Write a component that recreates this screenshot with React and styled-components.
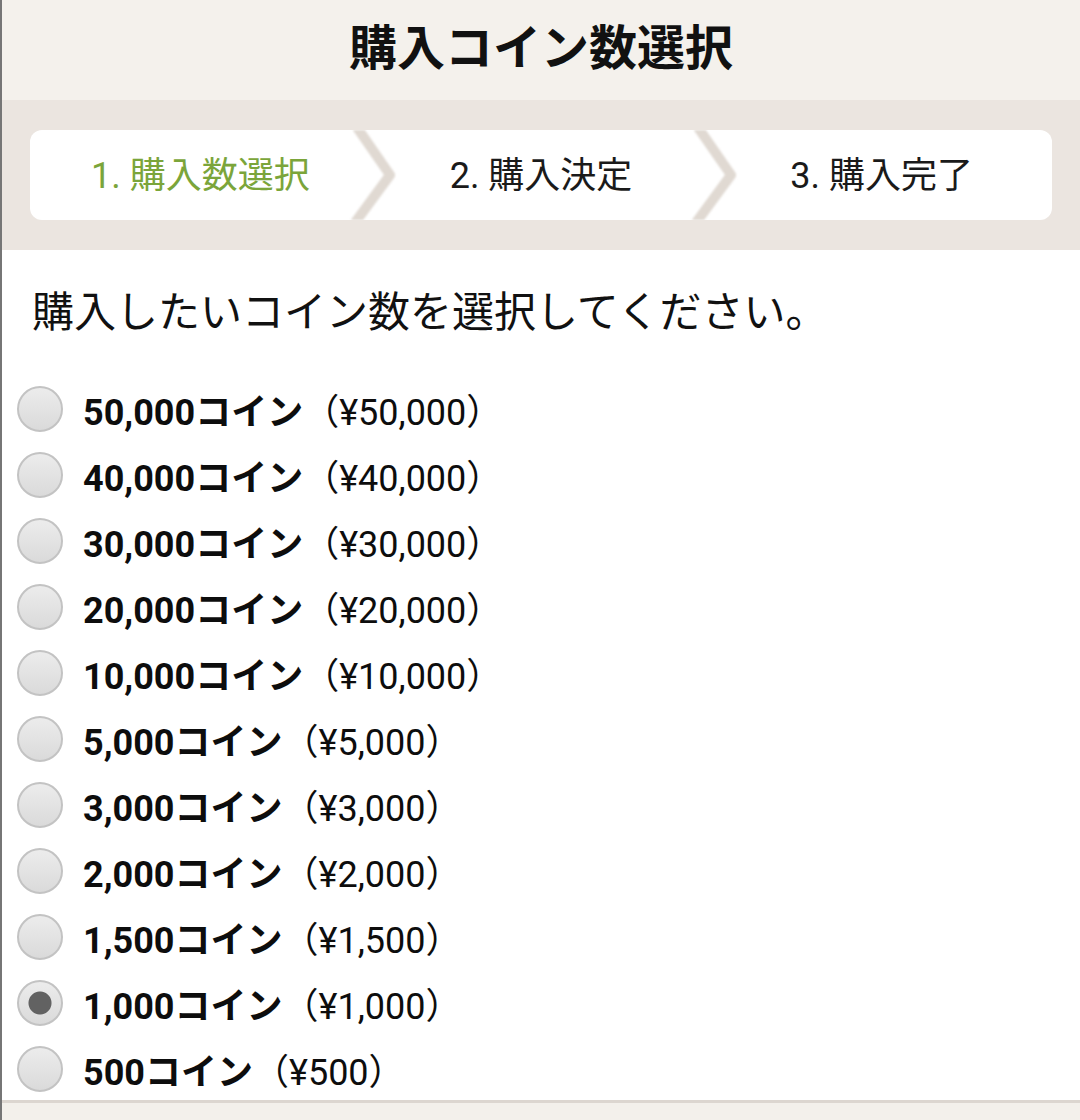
import { createGlobalStyle, styled } from "styled-components";
import { useState } from "react";

const GlobalStyle = createGlobalStyle`
  html, body {
    margin: 0;
    padding: 0;
    background: #ffffff;
  }
  body {
    font-family: Roboto, "Noto Sans CJK JP", "Noto Sans", sans-serif;
    color: #111111;
  }
  * { box-sizing: border-box; }
`;

const Page = styled.div`
  width: 1080px;
  min-height: 1120px;
  border-left: 2px solid #767676;
  display: flex;
  flex-direction: column;
`;

const Header = styled.header`
  height: 100px;
  background: #f4f1ec;
  display: flex;
  justify-content: center;
  align-items: center;
  padding-bottom: 12px;
`;

const Title = styled.h1`
  margin: 0;
  font-size: 48px;
  font-weight: 700;
  letter-spacing: 0;
`;

const StepBand = styled.div`
  background: #ebe5e0;
  padding: 30px 28px 30px 28px;
`;

const StepBox = styled.ol`
  list-style: none;
  margin: 0;
  padding: 0;
  height: 90px;
  background: #ffffff;
  border-radius: 12px;
  display: grid;
  grid-template-columns: repeat(3, 1fr);
  overflow: hidden;
`;

const Step = styled.li`
  position: relative;
  display: flex;
  align-items: center;
  justify-content: center;
  padding-bottom: 6px;
  font-size: 36px;
  color: ${props => (props.active ? "#7ba53a" : "#1a1a1a")};
`;

const Chevron = styled.svg`
  position: absolute;
  top: 0;
  left: 312px;
  width: 60px;
  height: 90px;
  filter: blur(0.8px);
  z-index: 1;
`;

const Lead = styled.p`
  margin: 0;
  padding: 33px 30px 0 30px;
  font-size: 42px;
  line-height: 60px;
`;

const CoinList = styled.ul`
  list-style: none;
  margin: 35px 0 0 0;
  padding: 0 0 0 15px;
  display: flex;
  flex-direction: column;
  gap: 4px;
`;

const Row = styled.li`
  height: 62px;
`;

const OptionLabel = styled.label`
  height: 100%;
  display: flex;
  align-items: center;
  gap: 20px;
  font-size: 36px;
  color: #0d0d0d;
  cursor: pointer;
`;

const Radio = styled.input`
  appearance: none;
  -webkit-appearance: none;
  margin: 0;
  width: 46px;
  height: 46px;
  flex: none;
  border-radius: 50%;
  border: 2px solid #c3c3c3;
  background: linear-gradient(#ececec, #dadada);
  &:checked {
    background: radial-gradient(circle, #626262 0, #626262 11px, transparent 12px),
      linear-gradient(#ececec, #dadada);
  }
`;

const Amount = styled.span`
  font-weight: 700;
`;

const Price = styled.span`
  font-weight: 400;
`;

const Footer = styled.footer`
  flex: 1;
  min-height: 17px;
  border-top: 3px solid #dcd6d0;
  background: #f3f0eb;
`;

const steps = ["1. 購入数選択", "2. 購入決定", "3. 購入完了"];

const coins = [50000, 40000, 30000, 20000, 10000, 5000, 3000, 2000, 1500, 1000, 500];

const fmt = n => n.toLocaleString("en-US");

function ChevronMark() {
  return (
    <Chevron viewBox="0 0 60 90">
      <polyline
        points="14,-4 48,45 12,94"
        fill="none"
        stroke="#e0d9d2"
        strokeWidth="10"
        strokeLinejoin="round"
      />
    </Chevron>
  );
}

export default function App() {
  const [selected, setSelected] = useState(1000);

  return (
    <>
      <GlobalStyle />
      <Page>
        <Header>
          <Title>購入コイン数選択</Title>
        </Header>
        <StepBand>
          <StepBox>
            {steps.map((s, i) => (
              <Step key={s} active={i === 0}>
                {s}
                {i < steps.length - 1 && <ChevronMark />}
              </Step>
            ))}
          </StepBox>
        </StepBand>
        <Lead>購入したいコイン数を選択してください。</Lead>
        <CoinList>
          {coins.map(c => (
            <Row key={c}>
              <OptionLabel>
                <Radio
                  type="radio"
                  name="coin"
                  checked={selected === c}
                  onChange={() => setSelected(c)}
                />
                <span>
                  <Amount>{fmt(c)}コイン</Amount>
                  <Price>（¥{fmt(c)}）</Price>
                </span>
              </OptionLabel>
            </Row>
          ))}
        </CoinList>
        <Footer />
      </Page>
    </>
  );
}
